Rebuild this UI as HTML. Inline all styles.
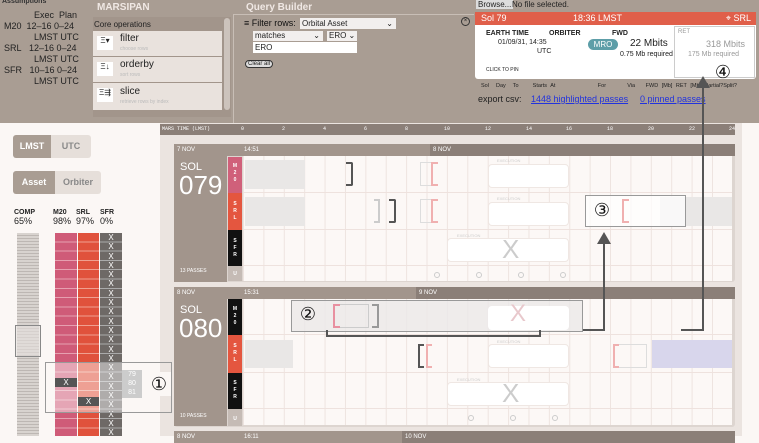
<!DOCTYPE html>
<html><head><meta charset="utf-8"><style>
*{box-sizing:border-box;margin:0;padding:0}
body{width:759px;height:436px;overflow:hidden;background:#fbf7f5;font-family:"Liberation Sans",sans-serif;position:relative;font-size:9px;color:#222}
.a{position:absolute}
.top{left:0;top:0;width:759px;height:123px;background:#a99d93}
.w{color:#fff}
.hdr{height:12px;font-size:6px;color:#fff;line-height:12px;padding-left:3px}
.lab{background:#a2958c;color:#fff}
.strip{font-size:5px;color:#fff;text-align:center;line-height:7px;font-weight:bold}
.grid{background-color:#fcf8f6;background-image:linear-gradient(90deg,#eee4e0 1px,transparent 1px);background-size:20.4px 100%}
.row{border-bottom:1px solid #eee2de}
.ex{background:#fff;border-radius:4px;border:1px solid #efe7e3}
.exl{font-size:4px;color:#ccc}
.circ{width:20px;height:20px;font-size:18px;line-height:20px;text-align:center;color:#111}
</style></head><body>
<div class="a top"></div>
<div class="a" style="left:2px;top:-2px;font-size:7px;font-weight:bold;color:#333">Assumptions</div>
<div class="a" style="left:4px;top:10px;font-size:9px;line-height:11px;color:#222">
<div style="padding-left:30px">Exec&nbsp;&nbsp;Plan</div>
<div>M20&nbsp;&nbsp;12–16 0–24</div>
<div style="padding-left:30px">LMST UTC</div>
<div>SRL&nbsp;&nbsp;&nbsp;12–16 0–24</div>
<div style="padding-left:30px">LMST UTC</div>
<div>SFR&nbsp;&nbsp;&nbsp;10–16 0–24</div>
<div style="padding-left:30px">LMST UTC</div>
</div>
<div class="a w" style="left:97px;top:2px;font-weight:bold;font-size:10px;color:#f0e8e4">MARSIPAN</div>
<div class="a" style="left:93px;top:17px;width:138px;height:100px;background:#a2958b"></div>
<div class="a" style="left:94px;top:20px;font-size:8px;color:#222">Core operations</div>
<div class="a" style="left:224px;top:18px;width:6px;height:92px;background:#ccc3bc;border-radius:3px"></div>
<div class="a" style="left:93px;top:31px;width:129px;height:25px;background:#e9e2dd"></div>
<div class="a" style="left:93px;top:57px;width:129px;height:25px;background:#e9e2dd"></div>
<div class="a" style="left:93px;top:83px;width:129px;height:27px;background:#e9e2dd"></div>
<div class="a" style="left:97px;top:36px;width:16px;height:14px;background:#fff;font-size:8px;text-align:center">Ξ▾</div>
<div class="a" style="left:97px;top:62px;width:16px;height:14px;background:#fff;font-size:8px;text-align:center">Ξ↓</div>
<div class="a" style="left:97px;top:88px;width:16px;height:14px;background:#fff;font-size:8px;text-align:center">Ξ⇶</div>
<div class="a" style="left:120px;top:33px;font-size:10px">filter</div><div class="a" style="left:120px;top:46px;font-size:5px;color:#bbb">choose rows</div>
<div class="a" style="left:120px;top:59px;font-size:10px">orderby</div><div class="a" style="left:120px;top:72px;font-size:5px;color:#bbb">sort rows</div>
<div class="a" style="left:120px;top:86px;font-size:10px">slice</div><div class="a" style="left:120px;top:99px;font-size:5px;color:#bbb">retrieve rows by index</div>
<div class="a" style="left:233px;top:14px;width:1px;height:109px;background:#c8beb6"></div>
<div class="a" style="left:246px;top:2px;font-weight:bold;font-size:10px;color:#f0e8e4">Query Builder</div>
<div class="a" style="left:234px;top:14px;width:240px;height:1px;background:#c8beb6"></div>
<div class="a" style="left:244px;top:18px;font-size:9px;color:#111">≡ Filter rows:</div>
<div class="a" style="left:300px;top:18px;width:96px;height:11px;background:#f2efee;font-size:8px;padding-left:2px;line-height:11px">Orbital Asset<span style="float:right;padding-right:3px">⌄</span></div>
<div class="a" style="left:253px;top:31px;width:70px;height:10px;background:#f2efee;font-size:8px;padding-left:2px;line-height:10px">matches<span style="float:right;padding-right:3px">⌄</span></div>
<div class="a" style="left:327px;top:31px;width:30px;height:10px;background:#f2efee;font-size:8px;padding-left:2px;line-height:10px">ERO ⌄</div>
<div class="a" style="left:253px;top:42px;width:104px;height:11px;background:#fff;font-size:8px;padding-left:2px;line-height:11px">ERO</div>
<div class="a" style="left:245px;top:60px;border:1px solid #333;border-radius:5px;font-size:6px;padding:0 2px;background:#ddd">Clear all</div>
<div class="a" style="left:461px;top:17px;width:9px;height:9px;border:1px solid #333;border-radius:50%;font-size:6px;text-align:center;line-height:7px">×</div>
<div class="a" style="left:476px;top:0;font-size:8px;background:#ddd;padding:0 2px">Browse...</div>
<div class="a" style="left:512px;top:0;font-size:8px">No file selected.</div>
<div class="a" style="left:475px;top:12px;width:281px;height:67px;background:#fff;border-radius:3px"></div>
<div class="a" style="left:475px;top:12px;width:281px;height:13px;background:#e05f4a;color:#fff;font-size:9px;line-height:13px">
<span class="a" style="left:6px">Sol 79</span><span class="a" style="left:98px">18:36 LMST</span><span class="a" style="right:5px">⌖ SRL</span></div>
<div class="a" style="left:486px;top:30px;font-size:7px;font-weight:bold">EARTH TIME</div>
<div class="a" style="left:549px;top:30px;font-size:7px;font-weight:bold">ORBITER</div>
<div class="a" style="left:612px;top:30px;font-size:7px;font-weight:bold">FWD</div>
<div class="a" style="left:498px;top:39px;font-size:7px">01/09/31, 14:35</div>
<div class="a" style="left:537px;top:48px;font-size:7px">UTC</div>
<div class="a" style="left:588px;top:39px;width:30px;height:11px;background:#5d9ea8;color:#fff;border-radius:6px;font-size:8px;text-align:center;line-height:11px">MRO</div>
<div class="a" style="left:630px;top:38px;font-size:10px">22 Mbits</div>
<div class="a" style="left:620px;top:51px;font-size:7px">0.75 Mb required</div>
<div class="a" style="left:486px;top:67px;font-size:5px">CLICK TO PIN</div>
<div class="a" style="left:674px;top:26px;width:81px;height:52px;border:1px solid #ccc;background:#fff"></div>
<div class="a" style="left:678px;top:29px;font-size:6px;color:#999">RET</div>
<div class="a" style="left:706px;top:39px;font-size:9px;color:#999">318 Mbits</div>
<div class="a" style="left:688px;top:51px;font-size:7px;color:#999">175 Mb required</div>
<div class="a circ" style="left:713px;top:62px">④</div>
<div class="a" style="left:481px;top:83px;font-size:5.5px;color:#222;word-spacing:2px">Sol&nbsp; Day&nbsp; To&nbsp;&nbsp;&nbsp; Starts At&nbsp;&nbsp;&nbsp;&nbsp;&nbsp;&nbsp;&nbsp;&nbsp;&nbsp;&nbsp;&nbsp; For&nbsp;&nbsp;&nbsp;&nbsp;&nbsp; Via&nbsp;&nbsp; FWD [Mb] RET [Mb] Partial?Split?</div>
<div class="a" style="left:478px;top:94px;font-size:9px">export csv:</div>
<div class="a" style="left:531px;top:94px;font-size:9px;color:#2233dd;text-decoration:underline">1448 highlighted passes</div>
<div class="a" style="left:640px;top:94px;font-size:9px;color:#2233dd;text-decoration:underline">0 pinned passes</div>

<div class="a" style="left:13px;top:135px;width:38px;height:23px;background:#a99d93;border-radius:3px 0 0 3px;color:#fff;font-weight:bold;font-size:9px;text-align:center;line-height:23px">LMST</div>
<div class="a" style="left:51px;top:135px;width:40px;height:23px;background:#e6dfda;border-radius:0 3px 3px 0;color:#888;font-weight:bold;font-size:9px;text-align:center;line-height:23px">UTC</div>
<div class="a" style="left:13px;top:171px;width:42px;height:23px;background:#a99d93;border-radius:3px 0 0 3px;color:#fff;font-weight:bold;font-size:9px;text-align:center;line-height:23px">Asset</div>
<div class="a" style="left:55px;top:171px;width:46px;height:23px;background:#e6dfda;border-radius:0 3px 3px 0;color:#888;font-weight:bold;font-size:9px;text-align:center;line-height:23px">Orbiter</div>
<div class="a" style="left:14px;top:208px;font-size:7px;font-weight:bold;line-height:9px">COMP<br><span style="font-weight:normal;font-size:9px">65%</span></div>
<div class="a" style="left:53px;top:208px;font-size:7px;font-weight:bold;line-height:9px">M20<br><span style="font-weight:normal;font-size:9px">98%</span></div>
<div class="a" style="left:76px;top:208px;font-size:7px;font-weight:bold;line-height:9px">SRL<br><span style="font-weight:normal;font-size:9px">97%</span></div>
<div class="a" style="left:100px;top:208px;font-size:7px;font-weight:bold;line-height:9px">SFR<br><span style="font-weight:normal;font-size:9px">0%</span></div>
<div class="a" style="left:17px;top:233px;width:22px;height:203px;background:#cfcac6;background-image:repeating-linear-gradient(#d8d3cf 0 2px,#bdb7b3 2px 3px)"></div>
<div class="a" style="left:15px;top:325px;width:26px;height:32px;border:1px solid #888;background:rgba(230,225,222,.6)"></div>
<div class="a" style="left:55px;top:233px;width:22px;height:203px;background:#cf5b78;background-image:repeating-linear-gradient(transparent 0 8.3px,#e6a0b0 8.3px 9.3px)"></div>
<div class="a" style="left:78px;top:233px;width:21px;height:203px;background:#e0523c;background-image:repeating-linear-gradient(transparent 0 8.3px,#efa090 8.3px 9.3px)"></div>
<div class="a" style="left:100px;top:233px;width:22px;height:203px;overflow:hidden;background:#6e6966;background-image:repeating-linear-gradient(transparent 0 8.3px,#aaa 8.3px 9.3px);color:#fff;font-size:8px;text-align:center;line-height:9.3px">X<br>X<br>X<br>X<br>X<br>X<br>X<br>X<br>X<br>X<br>X<br>X<br>X<br>X<br>X<br>X<br>X<br>X<br>X<br>X<br>X<br>X</div>
<div class="a" style="left:55px;top:362px;width:67px;height:50px;background:rgba(255,255,255,.45)"></div>
<div class="a" style="left:55px;top:378px;width:22px;height:9px;background:#555;color:#fff;font-size:8px;text-align:center;line-height:9px">X</div>
<div class="a" style="left:78px;top:397px;width:21px;height:9px;background:#555;color:#fff;font-size:8px;text-align:center;line-height:9px">X</div>
<div class="a" style="left:122px;top:370px;width:20px;height:28px;background:#ccc;color:#fff;font-size:7px;text-align:center;line-height:9px">79<br>80<br>81</div>

<div class="a" style="left:160px;top:123px;width:582px;height:313px;background:#ebe4e0"></div>
<div class="a" style="left:160px;top:124px;width:575px;height:11px;background:#8b7f78;color:#fff;font-size:5px;line-height:11px;font-family:'Liberation Mono',monospace">
<span class="a" style="left:2px">MARS TIME (LMST)</span>
<span class="a" style="left:81px">0</span><span class="a" style="left:122px">2</span><span class="a" style="left:163px">4</span><span class="a" style="left:204px">6</span><span class="a" style="left:245px">8</span><span class="a" style="left:284px">10</span><span class="a" style="left:325px">12</span><span class="a" style="left:366px">14</span><span class="a" style="left:406px">16</span><span class="a" style="left:447px">18</span><span class="a" style="left:488px">20</span><span class="a" style="left:529px">22</span><span class="a" style="left:569px">24</span></div>

<div class="a" style="left:174px;top:144px;width:561px;height:138px;background:#ddd5d0;border-radius:3px"></div>
<div class="a hdr" style="left:174px;top:144px;width:256px;background:#a2958c">7 NOV<span style="position:absolute;left:70px">14:51</span></div>
<div class="a hdr" style="left:430px;top:144px;width:305px;background:#8b7f78">8 NOV</div>
<div class="a lab" style="left:174px;top:156px;width:53px;height:126px"></div>
<div class="a w" style="left:180px;top:161px;font-size:11px">SOL</div>
<div class="a w" style="left:179px;top:170px;font-size:26px">079</div>
<div class="a w" style="left:180px;top:268px;font-size:5px">13 PASSES</div>
<div class="a strip" style="left:228px;top:157px;width:14px;height:36px;background:#d0607a;padding-top:6px">M<br>2<br>0</div>
<div class="a strip" style="left:228px;top:193px;width:14px;height:37px;background:#e4563f;padding-top:8px">S<br>R<br>L</div>
<div class="a strip" style="left:228px;top:230px;width:14px;height:36px;background:#111;padding-top:8px">S<br>F<br>R</div>
<div class="a strip" style="left:228px;top:266px;width:14px;height:15px;background:#c5bbb5;padding-top:5px">U</div>
<div class="a grid" style="left:243px;top:156px;width:489px;height:125px"></div>
<div class="a row" style="left:243px;top:156px;width:489px;height:37px"></div>
<div class="a row" style="left:243px;top:193px;width:489px;height:37px"></div>
<div class="a row" style="left:243px;top:230px;width:489px;height:36px"></div>
<div class="a" style="left:245px;top:160px;width:60px;height:29px;background:#e9e7e6"></div>
<div class="a" style="left:245px;top:197px;width:60px;height:29px;background:#e9e7e6"></div>
<div class="a" style="left:346px;top:162px;width:7px;height:24px;border:2px solid #555;border-left:none;border-radius:0 2px 2px 0"></div>
<div class="a" style="left:389px;top:199px;width:7px;height:24px;border:2px solid #555;border-left:none;border-radius:0 2px 2px 0"></div>
<div class="a" style="left:374px;top:199px;width:6px;height:24px;border:2px solid #ccc;border-left:none"></div>
<div class="a" style="left:420px;top:162px;width:12px;height:24px;border:1px solid #ddd"></div>
<div class="a" style="left:431px;top:162px;width:7px;height:24px;border:2px solid #f0b0b0;border-right:none"></div>
<div class="a" style="left:420px;top:199px;width:12px;height:24px;border:1px solid #ddd"></div>
<div class="a" style="left:431px;top:199px;width:7px;height:24px;border:2px solid #f0b0b0;border-right:none"></div>
<div class="a exl" style="left:497px;top:158px">EXECUTION</div>
<div class="a ex" style="left:488px;top:164px;width:81px;height:24px"></div>
<div class="a exl" style="left:497px;top:196px">EXECUTION</div>
<div class="a ex" style="left:488px;top:202px;width:81px;height:24px"></div>
<div class="a exl" style="left:457px;top:233px">EXECUTION</div>
<div class="a ex" style="left:447px;top:238px;width:122px;height:24px"></div>
<div class="a" style="left:502px;top:234px;font-size:26px;color:#ccc">X</div>
<div class="a" style="left:434px;top:272px;width:6px;height:6px;border:1px solid #ccc;border-radius:50%"></div>
<div class="a" style="left:476px;top:272px;width:6px;height:6px;border:1px solid #ccc;border-radius:50%"></div>
<div class="a" style="left:518px;top:272px;width:6px;height:6px;border:1px solid #ccc;border-radius:50%"></div>
<div class="a" style="left:560px;top:272px;width:6px;height:6px;border:1px solid #ccc;border-radius:50%"></div>
<div class="a" style="left:660px;top:197px;width:72px;height:29px;background:#e9e7e6"></div>
<div class="a" style="left:585px;top:195px;width:101px;height:32px;border:1px solid #999;background:rgba(255,255,255,.7)"></div>
<div class="a" style="left:622px;top:199px;width:7px;height:24px;border:2px solid #f0b0b0;border-right:none"></div>
<div class="a circ" style="left:592px;top:200px">③</div>

<div class="a" style="left:174px;top:287px;width:561px;height:140px;background:#ddd5d0;border-radius:3px"></div>
<div class="a hdr" style="left:174px;top:287px;width:242px;background:#a2958c">8 NOV<span style="position:absolute;left:70px">15:31</span></div>
<div class="a hdr" style="left:416px;top:287px;width:319px;background:#8b7f78">9 NOV</div>
<div class="a lab" style="left:174px;top:299px;width:53px;height:127px"></div>
<div class="a w" style="left:180px;top:304px;font-size:11px">SOL</div>
<div class="a w" style="left:179px;top:313px;font-size:26px">080</div>
<div class="a w" style="left:180px;top:413px;font-size:5px">10 PASSES</div>
<div class="a strip" style="left:228px;top:299px;width:14px;height:36px;background:#111;padding-top:7px">M<br>2<br>0</div>
<div class="a strip" style="left:228px;top:335px;width:14px;height:38px;background:#e4563f;padding-top:8px">S<br>R<br>L</div>
<div class="a strip" style="left:228px;top:373px;width:14px;height:36px;background:#111;padding-top:7px">S<br>F<br>R</div>
<div class="a strip" style="left:228px;top:409px;width:14px;height:17px;background:#c5bbb5;padding-top:7px">U</div>
<div class="a grid" style="left:243px;top:299px;width:489px;height:126px"></div>
<div class="a row" style="left:243px;top:299px;width:489px;height:36px"></div>
<div class="a row" style="left:243px;top:335px;width:489px;height:38px"></div>
<div class="a row" style="left:243px;top:373px;width:489px;height:36px"></div>
<div class="a" style="left:245px;top:340px;width:48px;height:28px;background:#e9e7e6"></div>
<div class="a" style="left:652px;top:340px;width:80px;height:28px;background:#d8d6ec"></div>
<div class="a" style="left:291px;top:300px;width:292px;height:32px;border:1px solid #999;background:rgba(235,233,232,.8)"></div>
<div class="a" style="left:333px;top:304px;width:36px;height:24px;border:1px solid #ccc"></div>
<div class="a" style="left:333px;top:304px;width:7px;height:24px;border:2px solid #e890a0;border-right:none"></div>
<div class="a" style="left:372px;top:304px;width:7px;height:24px;border:2px solid #999;border-left:none"></div>
<div class="a" style="left:488px;top:306px;width:81px;height:24px;background:#fff;border-radius:4px"></div>
<div class="a" style="left:510px;top:300px;font-size:24px;color:#e8c8cc">X</div>
<div class="a circ" style="left:298px;top:304px">②</div>
<div class="a" style="left:326px;top:330px;width:215px;height:7px;border:2px solid #555;border-top:none"></div>
<div class="a" style="left:418px;top:344px;width:6px;height:24px;border:2px solid #555;border-right:none"></div>
<div class="a" style="left:426px;top:344px;width:6px;height:24px;border:2px solid #f0b0b0;border-right:none"></div>
<div class="a exl" style="left:497px;top:339px">EXECUTION</div>
<div class="a ex" style="left:488px;top:344px;width:81px;height:24px"></div>
<div class="a" style="left:613px;top:344px;width:34px;height:24px;border:1px solid #ddd"></div>
<div class="a" style="left:613px;top:344px;width:6px;height:24px;border:2px solid #f0b0b0;border-right:none"></div>
<div class="a exl" style="left:457px;top:377px">EXECUTION</div>
<div class="a ex" style="left:447px;top:382px;width:122px;height:24px"></div>
<div class="a" style="left:502px;top:378px;font-size:26px;color:#ccc">X</div>
<div class="a" style="left:468px;top:415px;width:6px;height:6px;border:1px solid #ccc;border-radius:50%"></div>
<div class="a" style="left:510px;top:415px;width:6px;height:6px;border:1px solid #ccc;border-radius:50%"></div>
<div class="a" style="left:552px;top:415px;width:6px;height:6px;border:1px solid #ccc;border-radius:50%"></div>
<div class="a hdr" style="left:174px;top:431px;width:228px;background:#a2958c">8 NOV<span style="position:absolute;left:70px">16:11</span></div>
<div class="a hdr" style="left:402px;top:431px;width:333px;background:#8b7f78">10 NOV</div>

<div class="a" style="left:45px;top:362px;width:127px;height:51px;border:1px solid #999"></div>
<div class="a" style="left:147px;top:372px;width:24px;height:24px;background:#fbf7f5"></div>
<div class="a circ" style="left:149px;top:374px">①</div>

<svg class="a" style="left:0;top:0" width="759" height="436">
<g stroke="#555" stroke-width="2" fill="none">
<polyline points="583,330 604,330 604,243"/>
<polyline points="681,330 703,330 703,86"/>
</g>
<polygon points="597,244 611,244 604,232" fill="#555"/>
<polygon points="696,88 710,88 703,76" fill="#555"/>
</svg>
</body></html>
